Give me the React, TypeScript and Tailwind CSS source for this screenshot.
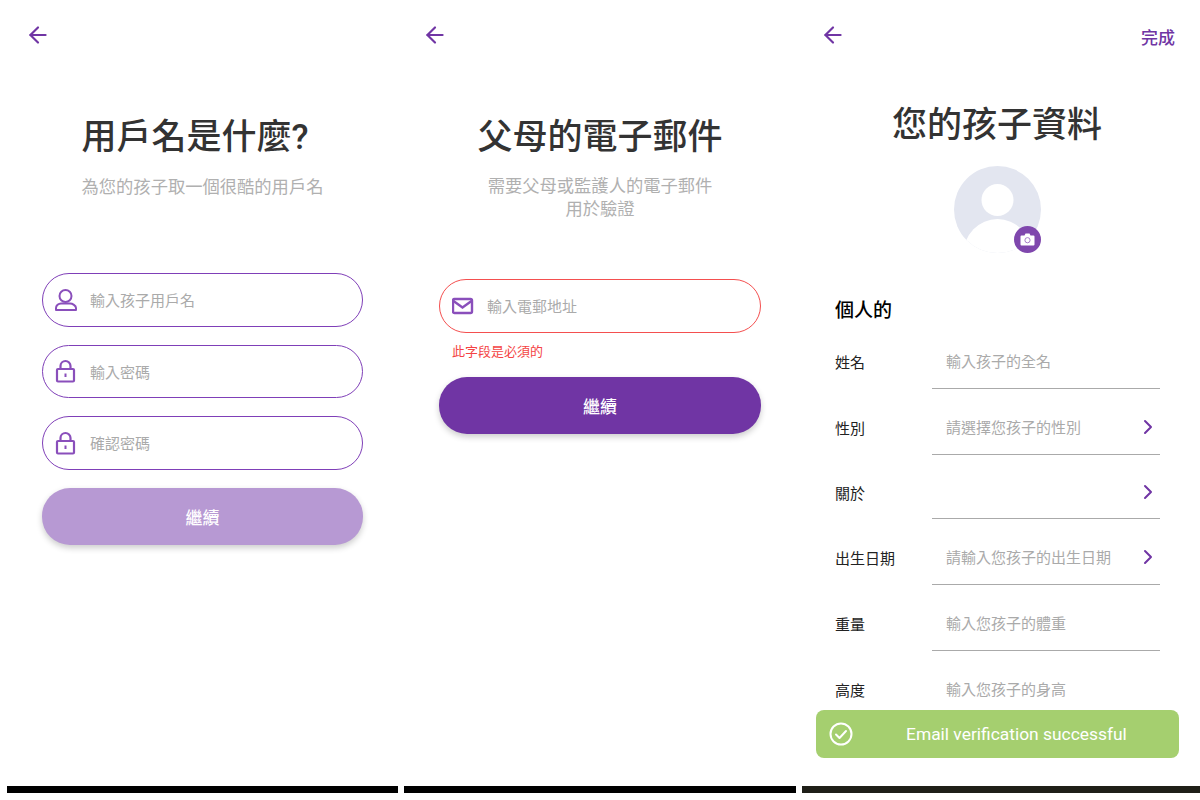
import React from "react";
import { ArrowLeft, ChevronRight } from "lucide-react";

const fontStack = "font-['Roboto','Noto_Sans_CJK_TC',sans-serif]";

const PersonIcon = () => (
  <svg width="24" height="24" viewBox="0 0 24 24" fill="none" stroke="#8a4fbb" strokeWidth="2">
    <circle cx="10.500" cy="8" r="6" />
    <path d="M1 22v-2c0-2.500 2.500-4.500 5-4.500h9c2.500 0 6 2 6 4.500v2z" strokeLinejoin="round" />
  </svg>
);

const LockIcon = () => (
  <svg width="24" height="24" viewBox="0 0 24 24" fill="none" stroke="#8a4fbb" strokeWidth="2.200">
    <rect x="2" y="10" width="17" height="12.500" rx="1" />
    <path d="M5.500 10V7a5 5 0 0 1 10 0v3" />
    <rect x="9.500" y="14.500" width="2" height="3.500" fill="#8a4fbb" stroke="none" />
  </svg>
);

const MailIcon = () => (
  <svg width="24" height="24" viewBox="0 0 24 24" fill="none" stroke="#8a4fbb" strokeWidth="2.400">
    <rect x="1" y="5" width="19" height="14" rx="1.500" />
    <path d="M1.500 7l9 6.500 9-6.500" />
  </svg>
);

const CheckCircleIcon = () => (
  <svg width="24" height="24" viewBox="0 0 24 24" fill="none" stroke="#ffffff" strokeWidth="2">
    <circle cx="12" cy="12" r="10.500" />
    <path d="M7 12.500l3.500 3.500 6.500-7" strokeLinecap="round" strokeLinejoin="round" />
  </svg>
);

const Avatar = () => (
  <div className="relative w-[87px] h-[87px]">
    <svg width="87" height="87" viewBox="0 0 87 87">
      <defs>
        <clipPath id="avatar-clip">
          <circle cx="43.500" cy="43.500" r="43.500" />
        </clipPath>
      </defs>
      <circle cx="43.500" cy="43.500" r="43.500" fill="#e3e6f0" />
      <circle cx="43.500" cy="34" r="16" fill="#ffffff" />
      <ellipse cx="43.500" cy="88" rx="34" ry="35" fill="#ffffff" clipPath="url(#avatar-clip)" />
    </svg>
    <div className="absolute right-0 bottom-0 w-[27px] h-[27px] rounded-full bg-[#7f47ad] flex items-center justify-center">
      <svg width="15" height="13" viewBox="0 0 15 13">
        <path d="M1.500 2.500h3L5.500 .5h4l1 2h3a1 1 0 0 1 1 1v8a1 1 0 0 1-1 1h-12a1 1 0 0 1-1-1v-8a1 1 0 0 1 1-1z" fill="#ffffff" />
        <circle cx="7.500" cy="7.200" r="2.600" fill="none" stroke="#a77cc9" strokeWidth="1" />
      </svg>
    </div>
  </div>
);

const BackButton = ({ className }: { className: string }) => (
  <ArrowLeft className={className} size={26} strokeWidth={2} color="#7035a4" />
);

interface FieldProps {
  icon: React.ReactNode;
  placeholder: string;
  className?: string;
}

const Field = ({ icon, placeholder, className }: FieldProps) => (
  <div className={`h-[53.600px] rounded-[27px] border flex items-center pl-[12px] ${className ?? "border-[#7f3fb8]"}`}>
    <span className="w-[24px] h-[24px] shrink-0">{icon}</span>
    <span className="ml-[11px] text-[15px] leading-[20px] text-[#aaaaaa] pt-[3px]">{placeholder}</span>
  </div>
);

const SubmitButton = ({ className }: { className: string }) => (
  <div
    className={`h-[57px] pt-[4px] rounded-[28px] flex items-center justify-center text-white text-[17px] font-medium shadow-[0_3px_6px_rgba(0,0,0,0.2)] ${className}`}
  >
    繼續
  </div>
);

const BottomBar = ({ className }: { className: string }) => <div className={`h-[7px] ${className}`} />;

const rows = [
  { label: "姓名", placeholder: "輸入孩子的全名", chevron: false, height: "h-[66px]" },
  { label: "性別", placeholder: "請選擇您孩子的性別", chevron: true, height: "h-[66px]" },
  { label: "關於", placeholder: "", chevron: true, height: "h-[64px]" },
  { label: "出生日期", placeholder: "請輸入您孩子的出生日期", chevron: true, height: "h-[66px]" },
  { label: "重量", placeholder: "輸入您孩子的體重", chevron: false, height: "h-[66px]" },
  { label: "高度", placeholder: "輸入您孩子的身高", chevron: false, height: "h-[66px]" },
];

export default function App() {
  return (
    <div className={`w-[1200px] h-[800px] overflow-hidden bg-white flex ${fontStack}`}>
      {/* username */}
      <div className="w-[391px] ml-[7px] flex flex-col">
        <div className="h-[786px] flex flex-col">
          <BackButton className="ml-[17.500px] mt-[22px]" />
          <h1 className="mt-[68px] pr-[15px] text-center text-[35px] leading-[44px] font-medium text-[#333333]">用戶名是什麼?</h1>
          <p className="mt-[15px] text-center text-[17.300px] leading-[24px] text-[#b0b0b0]">為您的孩子取一個很酷的用戶名</p>
          <div className="mt-[74px] mx-[35px] flex flex-col gap-[18px]">
            <Field icon={<PersonIcon />} placeholder="輸入孩子用戶名" />
            <Field icon={<LockIcon />} placeholder="輸入密碼" />
            <Field icon={<LockIcon />} placeholder="確認密碼" />
            <SubmitButton className="bg-[#b799d3]" />
          </div>
        </div>
        <BottomBar className="bg-black" />
      </div>

      {/* parent email */}
      <div className="w-[392px] ml-[6px] flex flex-col">
        <div className="h-[786px] flex flex-col">
          <BackButton className="ml-[17.500px] mt-[22px]" />
          <h1 className="mt-[68px] text-center text-[35px] leading-[44px] font-medium text-[#333333]">父母的電子郵件</h1>
          <p className="mt-[15px] text-center text-[17.300px] leading-[23px] text-[#b0b0b0]">
            需要父母或監護人的電子郵件
            <br />
            用於驗證
          </p>
          <div className="mt-[58px] mx-[35px] flex flex-col">
            <Field icon={<MailIcon />} placeholder="輸入電郵地址" className="border-[#f44f4f]" />
            <p className="mt-[9px] ml-[13px] text-[13px] leading-[20px] text-[#f44444]">此字段是必須的</p>
            <SubmitButton className="mt-[15.400px] bg-[#7035a4]" />
          </div>
        </div>
        <BottomBar className="bg-black" />
      </div>

      {/* child profile */}
      <div className="relative w-[398px] ml-[6px] flex flex-col">
        <div className="h-[786px] flex flex-col overflow-hidden">
          <div className="flex items-start justify-between pt-[22px] pl-[17.500px] pr-[25px]">
            <BackButton className="" />
            <span className="mt-[3px] text-[17px] leading-[26px] text-[#7035a4] font-medium">完成</span>
          </div>
          <h1 className="mt-[52px] text-center text-[35px] leading-[46px] font-medium text-[#333333] pr-[8px]">您的孩子資料</h1>
          <div className="mt-[17px] flex justify-center pr-[8px]">
            <Avatar />
          </div>
          <h2 className="mt-[45px] ml-[33px] text-[19px] leading-[26px] font-medium text-black">個人的</h2>
          <div className="mt-[-1px] ml-[33px] mr-[40px] flex flex-col">
            {rows.map((row) => (
              <div key={row.label} className={`flex ${row.height}`}>
                <span className="w-[97px] shrink-0 flex items-center pt-[14px] text-[15px] text-[#222222]">{row.label}</span>
                <div className="flex-1 flex items-center justify-between border-b border-[#aaaaaa] pt-[14px] pl-[14px]">
                  <span className="text-[15px] text-[#aaaaaa]">{row.placeholder}</span>
                  {row.chevron && <ChevronRight className="mb-[4px]" size={24} strokeWidth={2} color="#7035a4" />}
                </div>
              </div>
            ))}
          </div>
        </div>
        <BottomBar className="bg-[#1f1f18]" />

        <div className="absolute left-[14px] top-[710px] w-[363px] h-[48px] rounded-[8px] bg-[#a5cf6f] flex items-center pl-[13px]">
          <CheckCircleIcon />
          <span className="ml-[53px] text-[17.400px] text-white">Email verification successful</span>
        </div>
      </div>
    </div>
  );
}
